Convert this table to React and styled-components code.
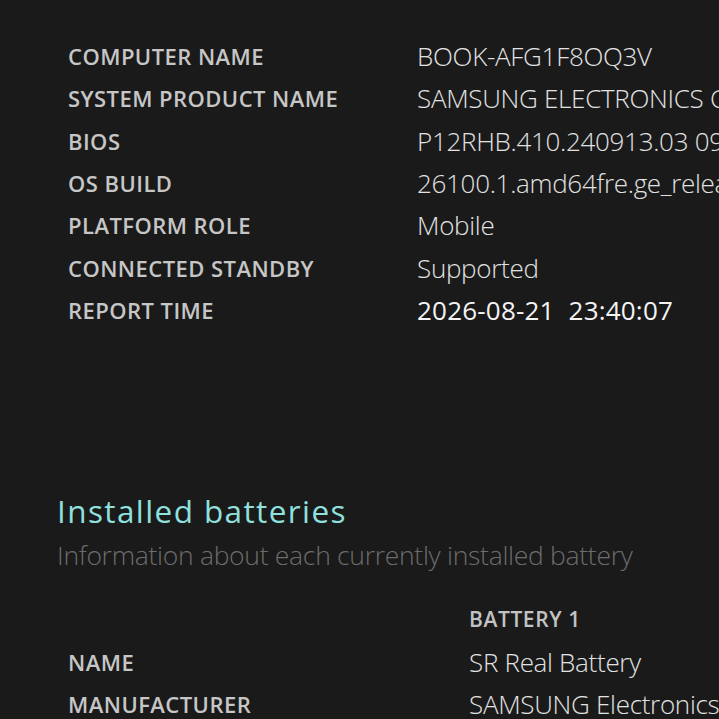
import React from "react";
import styled, { createGlobalStyle } from "styled-components";

const GlobalStyle = createGlobalStyle`
  html, body {
    margin: 0;
    padding: 0;
    background: #1a1a1a;
    overflow: hidden;
  }
`;

const systemInfo = [
  ["COMPUTER NAME", "BOOK-AFG1F8OQ3V"],
  ["SYSTEM PRODUCT NAME", "SAMSUNG ELECTRONICS CO., LTD. 960XHA"],
  ["BIOS", "P12RHB.410.240913.03 09/13/2024"],
  ["OS BUILD", "26100.1.amd64fre.ge_release.240331-1435"],
  ["PLATFORM ROLE", "Mobile"],
  ["CONNECTED STANDBY", "Supported"],
];

const batteryInfo = [
  ["NAME", "SR Real Battery"],
  ["MANUFACTURER", "SAMSUNG Electronics"],
];

const App = () => {
  return (
    <>
      <GlobalStyle />
      <Page>
        <InfoTable labelWidth={349}>
          {systemInfo.map(([label, value]) => (
            <React.Fragment key={label}>
              <Label>{label}</Label>
              <Value>{value}</Value>
            </React.Fragment>
          ))}
          <Label>REPORT TIME</Label>
          <Value strong>2026-08-21&nbsp;&nbsp;23:40:07</Value>
        </InfoTable>

        <Section>
          <Heading>Installed batteries</Heading>
          <Subtitle>Information about each currently installed battery</Subtitle>
        </Section>

        <InfoTable labelWidth={401} top={25}>
          <Label />
          <ColumnHead>BATTERY 1</ColumnHead>
          {batteryInfo.map(([label, value]) => (
            <React.Fragment key={label}>
              <Label>{label}</Label>
              <Value>{value}</Value>
            </React.Fragment>
          ))}
        </InfoTable>
      </Page>
    </>
  );
};

export default App;

const Page = styled.div`
  width: 719px;
  height: 719px;
  overflow: hidden;
  padding: 35px 0 0 57px;
  box-sizing: border-box;
  font-family: "Open Sans", "Noto Sans", sans-serif;
`;

const InfoTable = styled.div`
  display: grid;
  grid-template-columns: ${(p) => p.labelWidth}px auto;
  grid-auto-rows: 42.3px;
  align-items: center;
  padding-left: 11px;
  margin-top: ${(p) => p.top || 0}px;
  white-space: nowrap;
`;

const Label = styled.div`
  font-size: 22px;
  font-weight: 600;
  letter-spacing: 0.45px;
  color: #c6c6c6;
`;

const Value = styled.div`
  font-size: 26px;
  font-weight: ${(p) => (p.strong ? 400 : 300)};
  letter-spacing: ${(p) => (p.strong ? "0.2px" : "-0.3px")};
  color: ${(p) => (p.strong ? "#f4f4f4" : "#e2e2e2")};
`;

const ColumnHead = styled.div`
  font-size: 21px;
  font-weight: 600;
  letter-spacing: 0.6px;
  color: #c2c2c2;
`;

const Section = styled.div`
  margin-top: 160px;
  display: flex;
  flex-direction: column;
  gap: 6px;
  white-space: nowrap;
`;

const Heading = styled.h2`
  margin: 0;
  font-size: 31.5px;
  line-height: 40px;
  font-weight: 400;
  letter-spacing: 1.4px;
  color: #8fe0de;
`;

const Subtitle = styled.div`
  font-size: 26.5px;
  line-height: 36px;
  font-weight: 300;
  letter-spacing: -0.3px;
  color: #6c6c6c;
`;
